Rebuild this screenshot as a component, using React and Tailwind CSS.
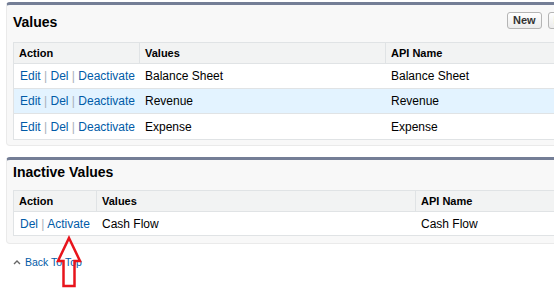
import React from 'react';

const linkCls = "text-[#015ba7]";
const sepCls = "text-[#a8b1bb]";

const Actions = ({ items }) => (
  <span className="whitespace-nowrap">
    {items.map((label, i) => (
      <React.Fragment key={label}>
        {i > 0 && <span className={sepCls}> | </span>}
        <span className={linkCls}>{label}</span>
      </React.Fragment>
    ))}
  </span>
);

const ListTable = ({ cols, rows, rowH }) => (
  <div className="border border-[#e0e3e5] bg-white">
    <div className="flex h-[21px] bg-[#f2f3f3] border-b border-[#e0e3e5] text-[11px] font-bold text-black">
      {cols.map((c, i) => (
        <div
          key={c.label}
          className={`flex items-center shrink-0 px-[5px] whitespace-nowrap ${i > 0 ? "border-l border-[#e0e3e5]" : ""}`}
          style={{ width: c.w }}
        >
          {c.label}
        </div>
      ))}
    </div>
    {rows.map((r, ri) => (
      <div
        key={r.name}
        className={`flex text-[12px] text-black ${r.hi ? "bg-[#e3f3ff]" : ""} ${ri < rows.length - 1 ? "border-b border-[#e0e3e5]" : ""}`}
        style={{ height: rowH }}
      >
        <div className="flex items-center pl-[6px] shrink-0 whitespace-nowrap" style={{ width: cols[0].w }}>
          <Actions items={r.actions} />
        </div>
        <div className="flex items-center pl-[6px] shrink-0 whitespace-nowrap" style={{ width: cols[1].w }}>
          {r.name}
        </div>
        <div className="flex items-center pl-[6px] shrink-0 whitespace-nowrap" style={{ width: cols[2].w }}>
          {r.name}
        </div>
      </div>
    ))}
  </div>
);

const active = [
  { name: "Balance Sheet", actions: ["Edit", "Del", "Deactivate"] },
  { name: "Revenue", actions: ["Edit", "Del", "Deactivate"], hi: true },
  { name: "Expense", actions: ["Edit", "Del", "Deactivate"] },
];

const inactive = [{ name: "Cash Flow", actions: ["Del", "Activate"] }];

const Button = ({ children }) => (
  <div className="h-[17px] px-[5px] flex items-center rounded-[3px] border border-[#b5b5b5] bg-gradient-to-b from-white to-[#ececec] text-[11px] font-bold text-[#333] leading-none">
    {children}
  </div>
);

export default function App() {
  return (
    <div className="relative w-[554px] h-[290px] overflow-hidden bg-white font-['Liberation_Sans',Arial,sans-serif]">
      <div className="w-[700px] pl-[6px] pt-[2px]">
        {/* Values */}
        <div className="rounded-[4px] border border-[#eaeaea] border-t-[3px] border-t-[#747e96] bg-[#f8f8f8] px-[6px] pb-[5px]">
          <div className="flex items-start h-[37px] pt-[7px]">
            <h2 className="w-[494px] mt-[2px] text-[14px] leading-[17px] font-bold text-black">Values</h2>
            <div className="flex gap-[6px]">
              <Button>New</Button>
              <Button>Reorder</Button>
            </div>
          </div>
          <ListTable
            cols={[{ label: "Action", w: 125 }, { label: "Values", w: 246 }, { label: "API Name", w: 300 }]}
            rows={active}
            rowH={25}
          />
        </div>

        {/* Inactive Values */}
        <div className="mt-[11px] rounded-[4px] border border-[#eaeaea] border-t-[3px] border-t-[#747e96] bg-[#f8f8f8] px-[6px] pb-[7px]">
          <div className="h-[30px] pt-[4px]">
            <h2 className="text-[14px] leading-[17px] font-bold text-black">Inactive Values</h2>
          </div>
          <ListTable
            cols={[{ label: "Action", w: 82 }, { label: "Values", w: 319 }, { label: "API Name", w: 270 }]}
            rows={inactive}
            rowH={23}
          />
        </div>

        <div className="mt-[11px] pl-[7px] flex items-center gap-[4px] text-[10.5px] leading-[14px]">
          <svg width="8" height="6" viewBox="0 0 8 6" className="mt-[-1px]">
            <path d="M1 5 L4 2 L7 5" fill="none" stroke="#666" strokeWidth="1.4" />
          </svg>
          <span className={linkCls}>Back To Top</span>
        </div>
      </div>

      <svg className="absolute left-0 top-0 pointer-events-none" width="554" height="290">
        <polygon
          points="69,238 80,261 74.5,261 74.5,286 63.5,286 63.5,261 58,261"
          fill="none"
          stroke="#e8141c"
          strokeWidth="2.5"
          strokeLinejoin="miter"
        />
      </svg>
    </div>
  );
}
